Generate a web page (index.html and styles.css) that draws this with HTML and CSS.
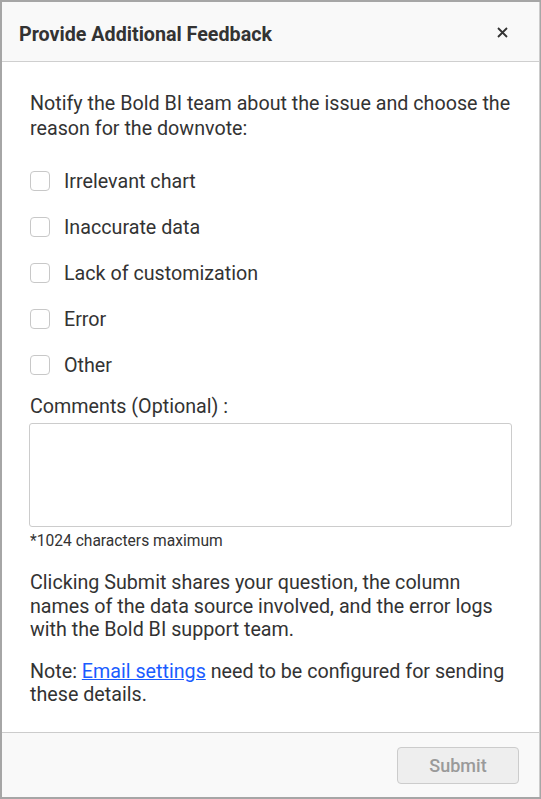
FILE: index.html
```html
<!DOCTYPE html>
<html>
<head>
<meta charset="utf-8">
<link rel="stylesheet" href="styles.css">
</head>
<body>
<div class="dialog">
  <div class="header">
    <span class="title">Provide Additional Feedback</span>
    <svg class="close" width="11" height="11" viewBox="0 0 11 11"><path d="M1 1 L10 10 M10 1 L1 10" stroke="#333" stroke-width="1.8" fill="none"/></svg>
  </div>
  <div class="content">
    <p class="intro">Notify the Bold BI team about the issue and choose the reason for the downvote:</p>
    <div class="options">
      <label class="option"><span class="box"></span><span>Irrelevant chart</span></label>
      <label class="option"><span class="box"></span><span>Inaccurate data</span></label>
      <label class="option"><span class="box"></span><span>Lack of customization</span></label>
      <label class="option"><span class="box"></span><span>Error</span></label>
      <label class="option"><span class="box"></span><span>Other</span></label>
    </div>
    <div class="comments-label">Comments (Optional) :</div>
    <div class="textarea"></div>
    <div class="hint">*1024 characters maximum</div>
    <p class="info">Clicking Submit shares your question, the column names of the data source involved, and the error logs with the Bold BI support team.</p>
    <p class="note">Note: <a href="#" class="link">Email settings</a> need to be configured for sending these details.</p>
  </div>
  <div class="footer">
    <button class="submit">Submit</button>
  </div>
</div>
</body>
</html>
```

FILE: styles.css
```css
html, body {
  margin: 0;
  padding: 0;
  height: 100%;
}
body {
  background: #a6a6a6;
  font-family: Roboto, "Liberation Sans", sans-serif;
  color: #333;
  padding: 2px 1px 2px 2px;
  box-sizing: border-box;
}
.dialog {
  height: 100%;
  background: #fff;
  display: flex;
  flex-direction: column;
  border-right: 1px solid #ccc;
  box-sizing: border-box;
}
.header {
  height: 60px;
  background: #f9f9f9;
  border-bottom: 1px solid #cfcfcf;
  display: flex;
  align-items: center;
  justify-content: space-between;
  padding: 5px 31px 0 17px;
  box-sizing: border-box;
  flex-shrink: 0;
}
.title {
  font-size: 19.7px;
  font-weight: 700;
  color: #333;
}
.close {
  display: block;
  margin-top: -3px;
}
.content {
  flex: 1;
  padding: 0 20px 0 28px;
}
.intro {
  margin: 29px 0 0;
  font-size: 19.7px;
  line-height: 25px;
}
.options {
  margin-top: 30px;
  display: flex;
  flex-direction: column;
  gap: 26px;
}
.option {
  display: flex;
  align-items: center;
  gap: 14px;
  font-size: 19.7px;
  height: 20px;
}
.box {
  width: 20px;
  height: 20px;
  box-sizing: border-box;
  border: 1px solid #c8c8c8;
  border-radius: 4px;
  background: #fff;
  flex-shrink: 0;
}
.comments-label {
  margin-top: 20px;
  font-size: 19.7px;
  line-height: 24px;
}
.textarea {
  margin-top: 4px;
  height: 104px;
  border: 1px solid #ccc;
  border-radius: 3px;
  margin-left: -1px;
  width: 483px;
  box-sizing: border-box;
}
.hint {
  margin-top: 4px;
  font-size: 15.6px;
  line-height: 20px;
}
.info {
  margin: 20px 0 0;
  max-width: 470px;
  font-size: 19.7px;
  line-height: 23.5px;
}
.note {
  margin: 18px 0 0;
  font-size: 19.7px;
  line-height: 23.5px;
}
.link {
  color: #1a5cff;
  text-decoration: underline;
}
.footer {
  height: 64px;
  background: #f9f9f9;
  border-top: 1px solid #ccc;
  display: flex;
  align-items: center;
  justify-content: flex-end;
  padding: 0 20px;
  flex-shrink: 0;
}
.submit {
  width: 122px;
  height: 37px;
  background: #eeeeee;
  border: 1px solid #cccccc;
  border-radius: 4px;
  color: #9a9a9a;
  font-family: Roboto, "Liberation Sans", sans-serif;
  font-size: 18px;
  font-weight: 500;
}
```
